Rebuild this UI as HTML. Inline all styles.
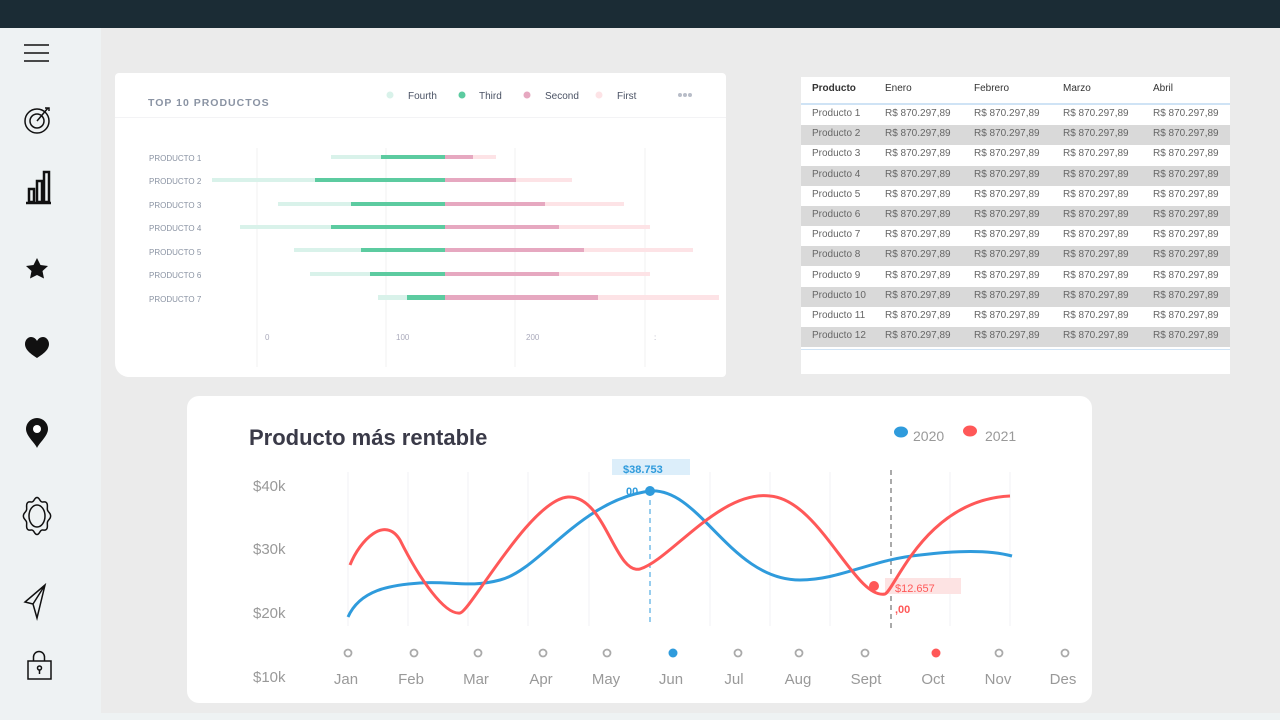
<!DOCTYPE html>
<html><head><meta charset="utf-8"><style>
*{margin:0;padding:0;box-sizing:border-box}
body{width:1280px;height:720px;overflow:hidden;background:#eef2f3;font-family:"Liberation Sans",sans-serif;position:relative}
.top{position:absolute;left:0;top:0;width:1280px;height:28px;background:#1b2c35}
.main{position:absolute;left:101px;top:28px;width:1179px;height:685px;background:#ebebeb}
.card1{position:absolute;left:115px;top:73px;width:611px;height:304px;background:#fff;border-radius:4px 4px 4px 14px}
.tbl{position:absolute;left:801px;top:77px;width:429px;height:297px;background:#fff;font-size:10px;color:#666}
.card2{position:absolute;left:187px;top:396px;width:905px;height:307px;background:#fff;border-radius:12px}
.row{position:absolute;left:0;width:429px;height:20px}
.row span{position:absolute;top:3px}
</style></head><body>
<div class="top"></div>
<div class="main"></div>
<svg style="position:absolute;left:0;top:28px" width="101" height="680" viewBox="0 28 101 680">
<g stroke="#111" fill="none" stroke-width="1.5">
<path d="M24 45H49M24 53H49M24 61H49"/>
<circle cx="37" cy="121" r="12"/><circle cx="37" cy="121" r="7"/><path d="M37 121L48 108M45 108h4v3"/>
<path d="M26 203H51" stroke-width="2.5"/>
<rect x="29" y="189" width="5" height="13" stroke-width="2.5"/><rect x="37" y="181" width="5" height="21" stroke-width="2.5"/><rect x="44" y="172" width="5" height="30" stroke-width="2.5"/>
<path id="gear" d=""/>
<ellipse cx="37" cy="516" rx="8" ry="11"/>
<path d="M45 585L25 602l8 2 4 14zM33 604L45 585"/>
<rect x="28" y="661" width="23" height="18"/><path d="M33.5 661v-4a5.5 5.5 0 0 1 11 0v4"/><circle cx="39.5" cy="668" r="2"/><path d="M39.5 670v4"/>
</g>
<path d="M37 258l3.5 7 7.5 1-5.5 5 1.5 7.5-7-3.5-7 3.5 1.5-7.5-5.5-5 7.5-1z" fill="#111"/>
<path d="M37 358c-6-4-12-8-12-14 0-4 3-7 6-7 3 0 5 2 6 4 1-2 3-4 6-4 3 0 6 3 6 7 0 6-6 10-12 14z" fill="#111"/>
<path d="M37 448c-2-5-11-12-11-19a11 11 0 0 1 22 0c0 7-9 14-11 19z" fill="#111"/><circle cx="37" cy="429" r="4" fill="#fff"/>
</svg>

<div class="card1"></div>
<svg style="position:absolute;left:115px;top:73px" width="611" height="304" viewBox="115 73 611 304" font-family="Liberation Sans,sans-serif">
<text x="148" y="106" font-size="10.5" fill="#8a93a3" letter-spacing="1" font-weight="bold">TOP 10 PRODUCTOS</text>
<g font-size="10" fill="#4a5264">
<circle cx="390" cy="95" r="3.5" fill="#d9f2ea"/><text x="408" y="99">Fourth</text>
<circle cx="462" cy="95" r="3.5" fill="#5ccba0"/><text x="479" y="99">Third</text>
<circle cx="527" cy="95" r="3.5" fill="#e6a8c0"/><text x="545" y="99">Second</text>
<circle cx="599" cy="95" r="3.5" fill="#fde3e6"/><text x="617" y="99">First</text>
</g>
<g fill="#b8bdc8"><circle cx="680" cy="95" r="2"/><circle cx="685" cy="95" r="2"/><circle cx="690" cy="95" r="2"/></g>
<path d="M115 117.5H726" stroke="#f3f3f5"/>
<g stroke="#f0f0f2"><path d="M257 148V367M386 148V367M515 148V367M645 148V367"/></g>
<g font-size="8" fill="#8a93a3">
<text x="149" y="161">PRODUCTO 1</text><text x="149" y="184">PRODUCTO 2</text><text x="149" y="208">PRODUCTO 3</text><text x="149" y="231">PRODUCTO 4</text><text x="149" y="255">PRODUCTO 5</text><text x="149" y="278">PRODUCTO 6</text><text x="149" y="302">PRODUCTO 7</text>
</g>
<rect x="140" y="302" width="100" height="8" fill="#fff"/>
<g font-size="8" fill="#aab"><text x="265" y="340">0</text><text x="396" y="340">100</text><text x="526" y="340">200</text><text x="654" y="340">:</text></g>
<g>
<rect x="331" y="155" width="50" height="4" fill="#d9f2ea"/><rect x="381" y="155" width="64" height="4" fill="#5ccba0"/><rect x="445" y="155" width="28" height="4" fill="#e6a8c0"/><rect x="473" y="155" width="23" height="4" fill="#fde3e6"/>
<rect x="212" y="178" width="103" height="4" fill="#d9f2ea"/><rect x="315" y="178" width="130" height="4" fill="#5ccba0"/><rect x="445" y="178" width="71" height="4" fill="#e6a8c0"/><rect x="516" y="178" width="56" height="4" fill="#fde3e6"/>
<rect x="278" y="202" width="73" height="4" fill="#d9f2ea"/><rect x="351" y="202" width="94" height="4" fill="#5ccba0"/><rect x="445" y="202" width="100" height="4" fill="#e6a8c0"/><rect x="545" y="202" width="79" height="4" fill="#fde3e6"/>
<rect x="240" y="225" width="91" height="4" fill="#d9f2ea"/><rect x="331" y="225" width="114" height="4" fill="#5ccba0"/><rect x="445" y="225" width="114" height="4" fill="#e6a8c0"/><rect x="559" y="225" width="91" height="4" fill="#fde3e6"/>
<rect x="294" y="248" width="67" height="4" fill="#d9f2ea"/><rect x="361" y="248" width="84" height="4" fill="#5ccba0"/><rect x="445" y="248" width="139" height="4" fill="#e6a8c0"/><rect x="584" y="248" width="109" height="4" fill="#fde3e6"/>
<rect x="310" y="272" width="60" height="4" fill="#d9f2ea"/><rect x="370" y="272" width="75" height="4" fill="#5ccba0"/><rect x="445" y="272" width="114" height="4" fill="#e6a8c0"/><rect x="559" y="272" width="91" height="4" fill="#fde3e6"/>
<rect x="378" y="295" width="29" height="5" fill="#d9f2ea"/><rect x="407" y="295" width="38" height="5" fill="#5ccba0"/><rect x="445" y="295" width="153" height="5" fill="#e6a8c0"/><rect x="598" y="295" width="121" height="5" fill="#fde3e6"/>
</g>
</svg>

<div class="tbl">
<div class="row" style="top:2px;color:#333"><span style="left:11px;font-weight:bold;top:4px">Producto</span><span style="left:84px;top:4px">Enero</span><span style="left:173px;top:4px">Febrero</span><span style="left:262px;top:4px">Marzo</span><span style="left:352px;top:4px">Abril</span></div>
<div style="position:absolute;left:0;top:26px;width:429px;height:2px;background:#cfe3f5"></div>
<div style="position:absolute;left:0;top:272px;width:429px;height:1px;background:#cfe3f5"></div>
<div id="rows"></div>
</div>
<script>
var h='';for(var i=1;i<=12;i++){var t=28+(i-1)*20.2;h+='<div class="row" style="top:'+t+'px;background:'+(i%2?'#fff':'#d9d9d9')+'"><span style="left:11px">Producto '+i+'</span><span style="left:84px">R$ 870.297,89</span><span style="left:173px">R$ 870.297,89</span><span style="left:262px">R$ 870.297,89</span><span style="left:352px">R$ 870.297,89</span></div>';}
document.getElementById('rows').innerHTML=h;
var d='';for(var k=0;k<=120;k++){var a=k/120*2*Math.PI;var r=1+0.09*Math.cos(8*a);var x=37+12.5*r*Math.sin(a),y=516-17*r*Math.cos(a);d+=(k?'L':'M')+x.toFixed(2)+' '+y.toFixed(2);}
document.getElementById('gear').setAttribute('d',d+'Z');
</script>

<div class="card2"></div>
<svg style="position:absolute;left:187px;top:396px" width="905" height="307" viewBox="187 396 905 307" font-family="Liberation Sans,sans-serif">
<text x="249" y="445" font-size="22" font-weight="bold" fill="#3a3a48">Producto más rentable</text>
<ellipse cx="901" cy="432" rx="7" ry="5.5" fill="#2f9bdc"/><text x="913" y="441" font-size="14" fill="#999">2020</text>
<ellipse cx="970" cy="431" rx="7" ry="5.5" fill="#ff5858"/><text x="985" y="441" font-size="14" fill="#999">2021</text>
<g font-size="15" fill="#999"><text x="253" y="491">$40k</text><text x="253" y="554">$30k</text><text x="253" y="618">$20k</text><text x="253" y="682">$10k</text></g>
<g stroke="#f2f2f4"><path d="M348 472V626M408 472V626M468 472V626M528 472V626M589 472V626M710 472V626M770 472V626M830 472V626M950 472V626M1010 472V626"/></g>
<rect x="612" y="459" width="78" height="16" fill="#dceefa"/><text x="623" y="473" font-size="11" font-weight="bold" fill="#2f9bdc">$38.753</text>
<text x="626" y="495" font-size="11" font-weight="bold" fill="#2f9bdc">00</text>
<path d="M650 491V626" stroke="#2f9bdc" stroke-dasharray="5 4"/>
<path d="M891 470V630" stroke="#555" stroke-dasharray="5 4"/>
<rect x="885" y="578" width="76" height="16" fill="#fde3e3"/><text x="895" y="592" font-size="11" fill="#ff5858">$12.657</text>
<text x="895" y="613" font-size="11" font-weight="bold" fill="#ff5858">,00</text>
<path d="M348 617C360 590 390 585 420 583C450 581 470 588 500 580C540 570 580 500 650 491C700 487 730 580 800 580C840 580 870 560 920 555C960 550 990 550 1012 556" stroke="#2f9bdc" stroke-width="3" fill="none"/>
<path d="M350 565C360 540 385 515 400 540C420 580 445 615 460 613C470 612 530 500 568 497C605 495 615 575 640 569C670 560 720 490 770 496C820 500 855 600 885 594C895 590 925 500 1010 496" stroke="#ff5858" stroke-width="3" fill="none"/>
<circle cx="650" cy="491" r="5" fill="#2f9bdc"/><circle cx="874" cy="586" r="5" fill="#ff5858"/>
<g fill="none" stroke="#aaa" stroke-width="1.8"><circle cx="348" cy="653" r="3.5"/><circle cx="414" cy="653" r="3.5"/><circle cx="478" cy="653" r="3.5"/><circle cx="543" cy="653" r="3.5"/><circle cx="607" cy="653" r="3.5"/><circle cx="738" cy="653" r="3.5"/><circle cx="799" cy="653" r="3.5"/><circle cx="865" cy="653" r="3.5"/><circle cx="999" cy="653" r="3.5"/><circle cx="1065" cy="653" r="3.5"/></g>
<circle cx="673" cy="653" r="4.5" fill="#2f9bdc"/><circle cx="936" cy="653" r="4.5" fill="#ff5858"/>
<g font-size="15" fill="#999" text-anchor="middle"><text x="346" y="684">Jan</text><text x="411" y="684">Feb</text><text x="476" y="684">Mar</text><text x="541" y="684">Apr</text><text x="606" y="684">May</text><text x="671" y="684">Jun</text><text x="734" y="684">Jul</text><text x="798" y="684">Aug</text><text x="866" y="684">Sept</text><text x="933" y="684">Oct</text><text x="998" y="684">Nov</text><text x="1063" y="684">Des</text></g>
</svg>
</body></html>
